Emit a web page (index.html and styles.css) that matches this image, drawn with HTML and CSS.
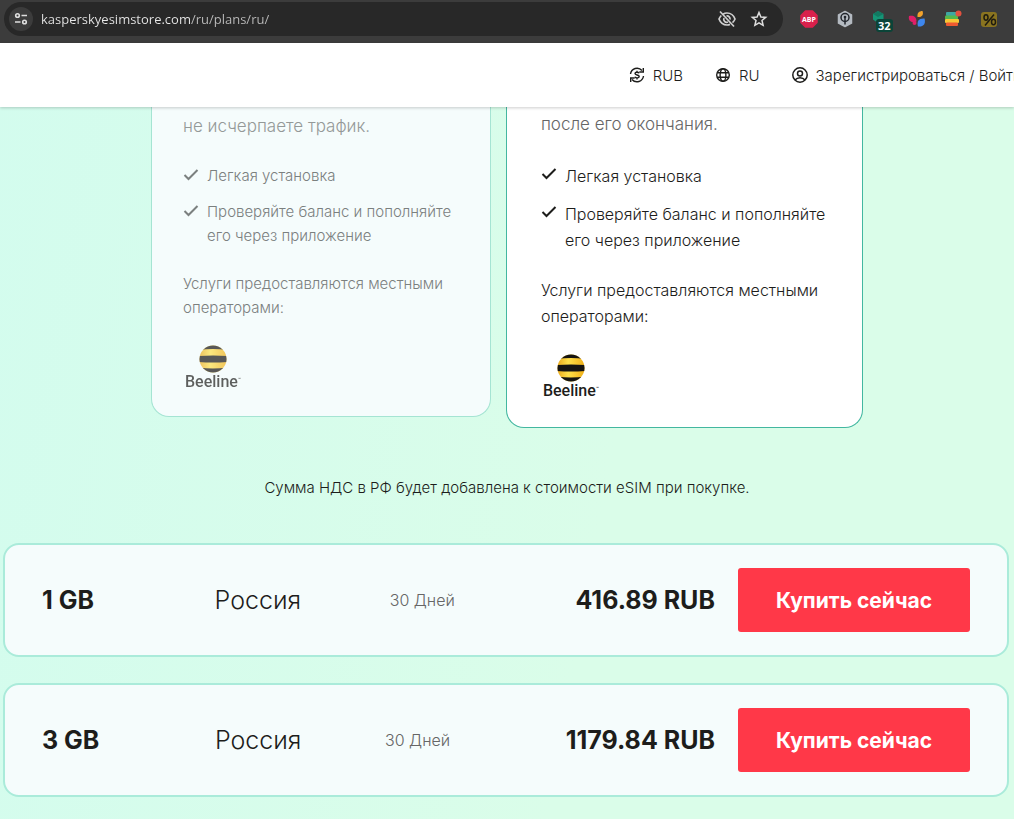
FILE: index.html
```
<!DOCTYPE html>
<html lang="ru">
<head>
  <meta charset="utf-8">
  <title>Kaspersky eSIM Store</title>
  <link rel="stylesheet" href="styles.css">
</head>
<body>

<div class="browser-bar">
  <div class="address">
    <button class="site-info" aria-label="Site information">
      <svg width="14" height="14" viewBox="0 0 14 14" fill="none" stroke="#dedede" stroke-width="1.6">
        <circle cx="3.5" cy="3.5" r="1.8"/><path d="M7.5 3.5H13M1 10h5.500"/><circle cx="10.500" cy="10" r="1.8"/>
      </svg>
    </button>
    <input class="url" type="text" aria-label="Address" value="kasperskyesimstore.com/ru/plans/ru/">
    <button class="bar-btn" aria-label="Tracking blocked">
      <svg width="20" height="18" viewBox="0 0 20 18" fill="none" stroke="#cfcfcf" stroke-width="1.7">
        <path d="M6 4.300C7.200 3.400 8.600 3 10 3c3.600 0 6.600 2.300 8 6-.6 1.500-1.400 2.700-2.500 3.700M13 14.400c-.9.4-1.900.6-3 .6-3.600 0-6.600-2.300-8-6 .6-1.400 1.300-2.500 2.300-3.500"/>
        <path d="M9.500 6A3 3 0 0 1 13 9.500M11 12A3 3 0 0 1 7 8"/>
        <path d="M3 1.500l14 15"/>
      </svg>
    </button>
    <button class="bar-btn" aria-label="Bookmark">
      <svg width="18" height="18" viewBox="0 0 18 18" fill="none" stroke="#dedede" stroke-width="1.5" stroke-linejoin="miter">
        <path d="M9 2.500l1.900 4.500 4.800.4-3.700 3.100 1.100 4.800L9 12.800l-4.100 2.500L6 10.500 2.300 7.400l4.800-.4z"/>
      </svg>
    </button>
  </div>
  <div class="extensions">
    <button class="bar-btn" aria-label="ABP">
      <svg width="18" height="18" viewBox="0 0 18 18">
        <path d="M5.500 1h7L17 5.500v7L12.500 17h-7L1 12.500v-7z" fill="#d9214c" stroke="#d9214c" stroke-width="1.500" stroke-linejoin="round"/>
        <text class="abp" x="9" y="11.500" text-anchor="middle">ABP</text>
      </svg>
    </button>
    <button class="bar-btn" aria-label="Key">
      <svg width="18" height="18" viewBox="0 0 18 18">
        <path d="M9 1.500l6.500 3.300v8.400L9 16.500l-6.500-3.300V4.800z" fill="#b4bac1" stroke="#b4bac1" stroke-width="1.500" stroke-linejoin="round"/>
        <circle cx="9" cy="7.500" r="4" fill="#b4bac1" stroke="#22262c" stroke-width="1.500"/>
        <circle cx="9" cy="7" r="1.300" fill="#22262c"/>
        <path d="M9 7v7.500" stroke="#22262c" stroke-width="1.500"/>
      </svg>
    </button>
    <button class="bar-btn" aria-label="Protection, 32">
      <svg width="18" height="18" viewBox="0 0 18 18">
        <path d="M6 1l5.500 3v5.500L6 13 1 9.500V4z" fill="#159576"/>
        <path d="M6 1l5.500 3L6 7 1 4z" fill="#127961"/>
      </svg>
      <span class="badge">32</span>
    </button>
    <button class="bar-btn" aria-label="Petals">
      <svg width="18" height="18" viewBox="0 0 18 18">
        <path d="M9.500 7C9 3 11 1 14.500 1c1.500 4-1 6.500-5 6z" fill="#f2a32c"/>
        <path d="M8.500 11.500C3 13.500 0 10.500 1 6c4.500-1 7.500 1 7.500 5.500z" fill="#e01f68"/>
        <circle cx="6.500" cy="13" r="2" fill="#e01f68"/>
        <path d="M10 16.500C8.500 11 11 8 16.500 8.500c1.500 5.500-1 8.500-6.500 8z" fill="#3e87ee"/>
      </svg>
    </button>
    <button class="bar-btn" aria-label="Layers">
      <svg width="18" height="18" viewBox="0 0 18 18">
        <rect x="2" y="2" width="11" height="4" rx="1" fill="#3ea7a3"/>
        <rect x="1" y="5.500" width="13" height="4" rx="1" fill="#54b84c"/>
        <rect x="1" y="9" width="14" height="4" rx="1" fill="#f7c736"/>
        <rect x="2" y="12.500" width="12" height="3.500" rx="1" fill="#ee5a31"/>
        <circle cx="14.500" cy="3.500" r="3" fill="#e2513f"/>
      </svg>
    </button>
    <button class="bar-btn" aria-label="Discounts">
      <svg width="18" height="18" viewBox="0 0 18 18">
        <rect x="1" y="2" width="16" height="15" rx="3" fill="#8a7420"/>
        <g fill="none" stroke="#1f1c10" stroke-width="1.500">
          <ellipse cx="6" cy="7.500" rx="2" ry="2.700"/><ellipse cx="13.500" cy="12" rx="2" ry="2.700"/><path d="M14 4.500L5 15.500"/>
        </g>
      </svg>
    </button>
  </div>
</div>

<header class="header">
  <a class="header-link" href="#currency">
    <svg width="16" height="16" viewBox="0 0 16 16" fill="none" stroke="#1d1d1b" stroke-width="1.400">
      <path d="M1.500 7A6.600 6.600 0 0 1 13 3.500M14.500 9A6.600 6.600 0 0 1 3 12.500"/>
      <path d="M14.300 1v4h-4M1.700 15v-4h4"/>
      <path d="M10.200 6.200C9.600 5 6 4.700 6 6.500c0 2 4.200 1 4.200 3 0 1.900-3.800 1.700-4.400.3M8 3.700V5M8 11v1.400"/>
    </svg>
    RUB
  </a>
  <a class="header-link" href="#language">
    <svg width="16" height="16" viewBox="0 0 16 16" fill="none" stroke="#1d1d1b" stroke-width="1.400">
      <circle cx="8" cy="8" r="6.300"/><ellipse cx="8" cy="8" rx="2.900" ry="6.300"/><path d="M2.200 5.800h11.600M2.200 10.200h11.600"/>
    </svg>
    RU
  </a>
  <a class="header-link" href="#login">
    <svg width="16" height="16" viewBox="0 0 16 16" fill="none" stroke="#1d1d1b" stroke-width="1.500">
      <circle cx="8" cy="8" r="7.200"/><circle cx="8" cy="6.500" r="2.500"/><path d="M3 13c2.500-3 7.500-3 10 0"/>
    </svg>
    Зарегистрироваться / Войти
  </a>
</header>

<main class="main">
  <div class="cards">
    <section class="card muted">
      <p class="desc">не исчерпаете трафик.</p>
      <ul class="features">
        <li><svg class="check" viewBox="0 0 16 16"><path d="M1.500 8l4 4 9-9"/></svg>Легкая установка</li>
        <li><svg class="check" viewBox="0 0 16 16"><path d="M1.500 8l4 4 9-9"/></svg>Проверяйте баланс и пополняйте его через приложение</li>
      </ul>
      <p class="note">Услуги предоставляются местными операторами:</p>
      <div class="beeline">
        <svg class="ball" viewBox="0 0 28 28">
          <defs>
            <clipPath id="ball"><circle cx="14" cy="14" r="13.500"/></clipPath>
            <linearGradient id="gold"><stop offset="0" stop-color="#e9a81c"/><stop offset=".4" stop-color="#ffe04a"/><stop offset="1" stop-color="#f0ae16"/></linearGradient>
          </defs>
          <g clip-path="url(#ball)">
            <path d="M0 0h28v28H0z" fill="url(#gold)"/>
            <path d="M0 0h28v5Q14 3 0 5zM0 11q14-1 28 0v6q-14 1-28 0zM0 22.500q14 2 28 0V28H0z" fill="#161412"/>
          </g>
        </svg>
        <span class="brand">Beeline<sup>™</sup></span>
      </div>
    </section>
    <section class="card active">
      <p class="desc">после его окончания.</p>
      <ul class="features">
        <li><svg class="check" viewBox="0 0 16 16"><path d="M1.500 8l4 4 9-9"/></svg>Легкая установка</li>
        <li><svg class="check" viewBox="0 0 16 16"><path d="M1.500 8l4 4 9-9"/></svg>Проверяйте баланс и пополняйте его через приложение</li>
      </ul>
      <p class="note">Услуги предоставляются местными операторами:</p>
      <div class="beeline">
        <svg class="ball" viewBox="0 0 28 28">
          <g clip-path="url(#ball)">
            <path d="M0 0h28v28H0z" fill="url(#gold)"/>
            <path d="M0 0h28v5Q14 3 0 5zM0 11q14-1 28 0v6q-14 1-28 0zM0 22.500q14 2 28 0V28H0z" fill="#161412"/>
          </g>
        </svg>
        <span class="brand">Beeline<sup>™</sup></span>
      </div>
    </section>
  </div>

  <p class="vat">Сумма НДС в РФ будет добавлена к стоимости eSIM при покупке.</p>

  <div class="plans">
    <div class="plan">
      <div class="plan-info">
        <strong class="size">1 GB</strong>
        <span class="country">Россия</span>
        <span class="days">30 Дней</span>
        <strong class="price">416.89 RUB</strong>
      </div>
      <button class="buy">Купить сейчас</button>
    </div>
    <div class="plan">
      <div class="plan-info">
        <strong class="size">3 GB</strong>
        <span class="country">Россия</span>
        <span class="days">30 Дней</span>
        <strong class="price">1179.84 RUB</strong>
      </div>
      <button class="buy">Купить сейчас</button>
    </div>
  </div>
</main>

</body>
</html>
```
FILE: styles.css
```
* {
  box-sizing: border-box;
}
body {
  margin: 0;
  min-height: 100vh;
  overflow-x: hidden;
  display: flex;
  flex-direction: column;
  font-family: Inter, "Noto Sans", sans-serif;
  font-weight: 300;
  color: #1d1d1b;
  background: linear-gradient(100deg, #d3fcee, #dafde9 60%);
}
p, ul {
  margin: 0;
  padding: 0;
}
button {
  border: 0;
  font-family: inherit;
  cursor: pointer;
}

/* browser bar */
.browser-bar {
  display: flex;
  align-items: flex-start;
  height: 43px;
  padding: 2px 16px 0 4px;
  background: #3c3c3c;
}
.address {
  flex: 1;
  display: flex;
  align-items: center;
  gap: 13px;
  height: 34px;
  padding: 0 15px 0 5px;
  border-radius: 17px;
  background: #282828;
}
.site-info {
  display: flex;
  align-items: center;
  justify-content: center;
  width: 24px;
  height: 24px;
  padding: 0;
  border-radius: 50%;
  background: #3c3c3c;
}
.url {
  flex: 1;
  min-width: 0;
  margin-left: -5px;
  padding: 0;
  border: 0;
  outline: 0;
  font: 13px "Open Sans", sans-serif;
  color: transparent;
  background: linear-gradient(90deg, #e8e8e8 149px, #bcbcbc 149px);
  background-clip: text;
  -webkit-background-clip: text;
}
.bar-btn {
  position: relative;
  display: flex;
  padding: 0;
  background: none;
}
.extensions {
  display: flex;
  align-items: center;
  gap: 18px;
  height: 34px;
  padding-left: 17px;
}
.abp {
  font: bold 7px "Open Sans", sans-serif;
  fill: #fff;
}
.badge {
  position: absolute;
  left: 4px;
  top: 9px;
  padding: 0 2px;
  border-radius: 3px;
  font: bold 11px/13px "Open Sans", sans-serif;
  color: #fff;
  background: #0b4438;
}

/* site header */
.header {
  position: relative;
  display: flex;
  align-items: center;
  gap: 32px;
  height: 64px;
  padding-left: 62%;
  overflow: hidden;
  background: #fff;
  box-shadow: 0 1px 3px rgba(0, 0, 0, 0.2);
}
.header-link {
  display: flex;
  align-items: center;
  gap: 8px;
  flex: none;
  font-size: 15px;
  white-space: nowrap;
  color: #1d1d1b;
  text-decoration: none;
}

/* cards */
.cards {
  display: flex;
  align-items: flex-start;
  gap: 15px;
  max-width: 712px;
  margin: 0 auto;
}
.card {
  border: 1px solid #43b7a0;
  border-top: 0;
  border-radius: 0 0 18px 18px;
  background: #fff;
}
.desc {
  line-height: 26px;
}
.features {
  margin: 25px 0 24px;
  list-style: none;
}
.features li {
  display: flex;
  gap: 8px;
}
.features li + li {
  margin-top: 12px;
}
.check {
  flex: none;
  width: 16px;
  height: 16px;
  margin-top: 3px;
  fill: none;
  stroke: currentColor;
  stroke-width: 2;
}
.muted {
  flex: 340 1 0;
  padding: 6px 24px 25px 31px;
  border-color: #a5e4d3;
  background: #f5fcfc;
  color: #7b807f;
  font-size: 15px;
  line-height: 24px;
}
.muted .desc {
  font-size: 17px;
  color: #949998;
}
.active {
  flex: 357 1 0;
  padding: 4px 24px 27px 34px;
  font-size: 16px;
  line-height: 26px;
}
.active .features {
  margin-top: 26px;
}
.active .desc {
  font-size: 17px;
  color: #666;
}
.beeline {
  display: flex;
  flex-direction: column;
  align-items: center;
  width: 60px;
  margin-top: 25px;
  font: 500 16px/18px Roboto, sans-serif;
  color: #1d1d1b;
}
.muted .beeline {
  opacity: 0.7;
}
.ball {
  width: 28px;
  height: 28px;
}
.brand sup {
  font-size: 5px;
  line-height: 0;
}

/* plans */
.vat {
  margin: 48px 16px 43px;
  font-size: 15px;
  line-height: 24px;
  text-align: center;
}
.plans {
  display: grid;
  gap: 26px;
  padding: 0 5px 21px 3px;
}
.plan {
  display: flex;
  align-items: center;
  gap: 23px;
  padding: 23px 37px;
  border: 2px solid #aaebda;
  border-radius: 16px;
  background: #f5fcfc;
}
.plan-info {
  flex: 1;
  display: flex;
  align-items: center;
  justify-content: space-between;
  font-size: 25px;
  white-space: nowrap;
}
.size, .price {
  font-weight: 700;
}
.country, .price {
  padding-left: 32px;
}
.days {
  font-size: 16px;
  color: #666;
}
.buy {
  width: 232px;
  height: 64px;
  border-radius: 3px;
  font-size: 21px;
  font-weight: 700;
  color: #fff;
  background: #ff3848;
}
```
